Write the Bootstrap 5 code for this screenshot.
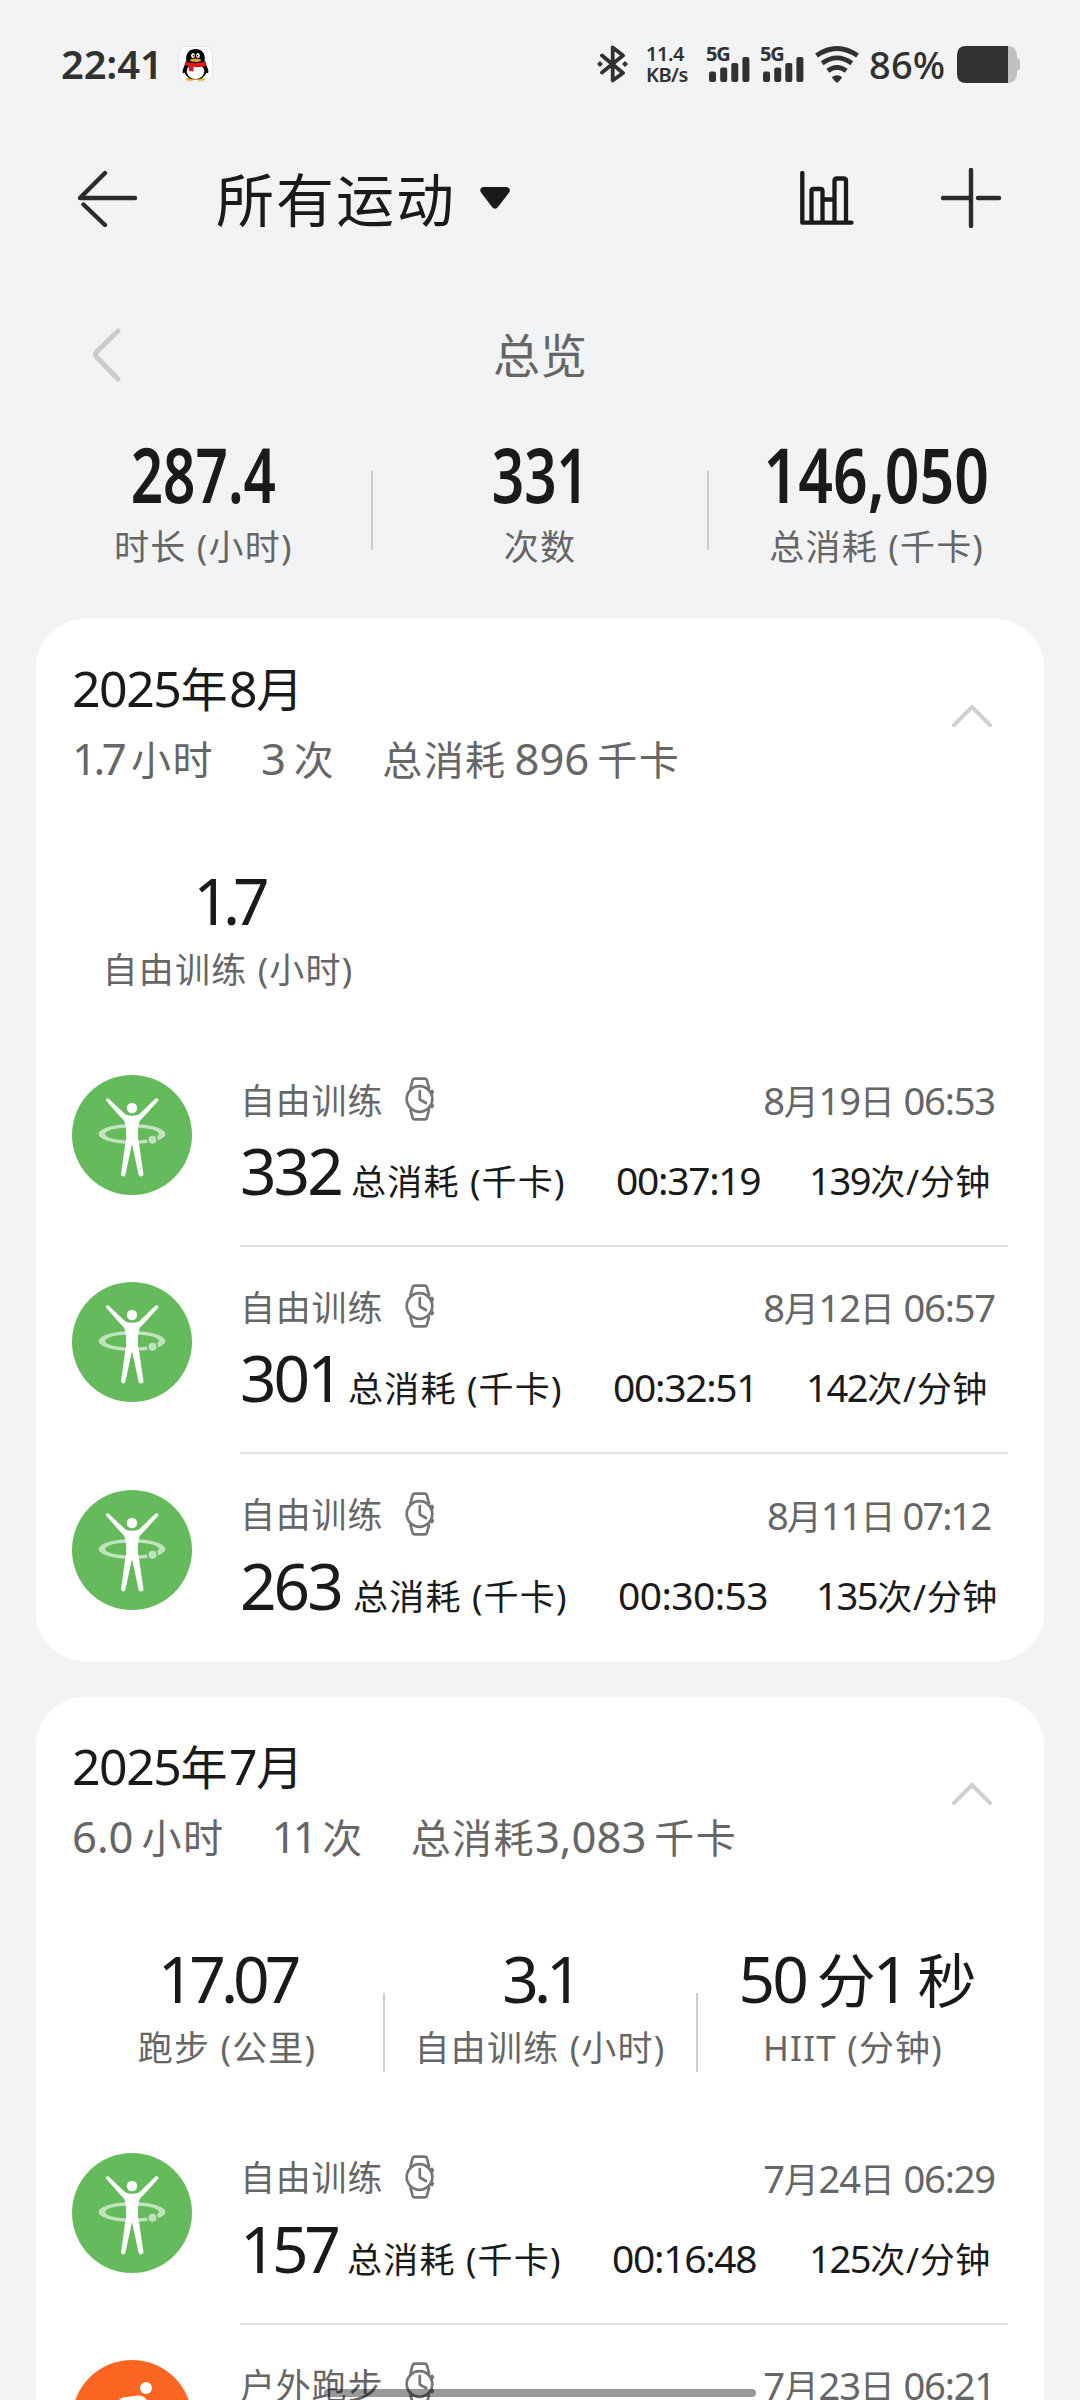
<!DOCTYPE html>
<html lang="zh-CN">
<head>
<meta charset="utf-8">
<meta name="viewport" content="width=device-width, initial-scale=1">
<title>所有运动</title>
<link href="https://cdn.jsdelivr.net/npm/bootstrap@5.3.0/dist/css/bootstrap.min.css" rel="stylesheet">
<style>
  body{background:#f1f3f5;color:#1a1a1a;font-family:"Noto Sans","Noto Sans CJK SC",sans-serif;font-size:35px;line-height:1}
  .screen{width:1080px;height:2400px;overflow:hidden}
  .cjk{font-family:"Noto Sans CJK SC",sans-serif}
  svg{display:block;flex:none}
  .soft{color:#666}
  /* status bar */
  .status{height:128px;padding:0 60px 0 61px;color:#303231}
  .clock{font-size:40px;font-weight:600;width:117px;letter-spacing:-.2px}
  .rate{font-size:20px;font-weight:600;line-height:21px;width:61px;letter-spacing:-.5px;margin-left:18px}
  .sig{width:54px;height:36px;padding-left:2px}
  .sig-tag{font-size:20px;font-weight:700;line-height:15px;left:-1px;top:0;letter-spacing:-1.2px}
  .pct{font-size:38px;font-weight:500;letter-spacing:.2px;width:88px;margin-left:10px}
  /* title bar */
  .topbar{height:140px;padding:0 77px 0 75px}
  .page-title{font-size:58px;letter-spacing:2px;margin-left:77px;line-height:64px;margin-top:-2px}
  .plus{margin-left:85px}
  /* overview */
  .overview-head{height:174px;padding:0 90px}
  .overview-title{font-size:47px;line-height:50px;margin-top:-5px}
  .totals{height:177px;padding:0 36px}
  .totals .stat{padding-top:2px}
  .totals .rule{margin-top:29px}
  .total-num{font-size:75px;font-weight:600;line-height:60px;height:60px;transform:scaleX(.755);white-space:nowrap}
  .total-num.long{transform:scaleX(.81)}
  .totals .stat-label{margin-top:25px}
  .stat-label{line-height:36px;color:#666;white-space:nowrap;letter-spacing:1.2px}
  .rule{width:2px;height:79px;background:#cbcccd;flex:none}
  /* month cards */
  .month{margin:0 36px 36px;border-radius:48px;background:#fff;padding:0 36px}
  .month-head{height:197px;padding-top:44px}
  .month-head > svg{margin:41px 15px 0 0}
  .month-title{font-size:47px;line-height:50px;letter-spacing:1.6px}
  .month-title .n{font-size:50px}
  .month-sub{font-size:40px;line-height:44px;letter-spacing:1.4px;color:#666;margin-top:22px}
  .month-sub .n{letter-spacing:0}
  .n{font-size:1.09em;letter-spacing:-.03em}
  .month-sub .tight{letter-spacing:-.08em}
  .gap-a{margin-left:47px}
  .month-stats{height:224px}
  .month-stats .stat{padding-top:53px}
  .month-stats .stat-label{margin-top:19px}
  .month-stats .rule{margin-top:99px;margin-left:1px}
  .stat-num{font-size:64px;line-height:64px;height:64px;white-space:nowrap;letter-spacing:-5px}
  .stat-num.narrow{letter-spacing:-7px}
  .stat-num.wide{letter-spacing:-3px;padding-left:6px}
  .stat-num .unit-cjk{font-size:59px;margin:0 0 0 11px}
  /* workout rows */
  .workout{height:207.4px;padding-top:35px}
  .workout.final{height:206px}
  .workout-body{margin-left:48px;width:768px;height:172px;border-bottom:2px solid #e2e2e2}
  .workout-body.last{border:0}
  .line-one{height:52px;padding-right:13px;letter-spacing:.8px;margin-top:-1px}
  .line-one svg{margin:-2px 0 0 22px}
  .line-two{height:80px;white-space:nowrap;padding-top:13px}
  .kcal{font-size:64px;letter-spacing:-3px;width:var(--kcal,111px);flex:none}
  .unit{width:265px;letter-spacing:1.2px;flex:none}
  .dur{font-size:39px;letter-spacing:var(--dls,-1.3px);width:var(--dur,193px);flex:none}
  .bpm{letter-spacing:.7px}
  .bpm .n{letter-spacing:-1.4px}
  .row-b{--kcal:108px;--dur:193px}
  .row-c{--kcal:113px;--dur:198px;--dls:-.6px}
  .row-d{--kcal:107px;--dur:197px}
  .row-d .kcal{letter-spacing:-4.5px}
  .date{letter-spacing:-.2px}
  .date .n{letter-spacing:-1.2px}
  .row-c .date{letter-spacing:-1px;margin-right:5px}
  .row-c .date .n{letter-spacing:-2px}
  .gesture{left:324px;top:2389px;width:432px;height:8px;border-radius:4px;background:rgba(0,0,0,.4)}
</style>
<script src="https://cdn.jsdelivr.net/npm/bootstrap@5.3.0/dist/js/bootstrap.bundle.min.js"></script>
</head>
<body>
<svg width="0" height="0" class="position-absolute">
  <defs>
    <symbol id="free" viewBox="0 0 120 120">
      <circle cx="60" cy="60" r="60" fill="#65bb5c"/>
      <path fill="#fff" fill-opacity=".6" fill-rule="evenodd" d="M26.5 59a33.5 10 0 0 1 67 0a33.5 10 0 0 1-67 0zM33 59a27 6.6 0 0 0 54 0a27 6.6 0 0 0-54 0z"/>
      <circle cx="80.500" cy="64.700" r="5.600" fill="#65bb5c"/>
      <circle cx="80.500" cy="64.700" r="4" fill="#c1e4be"/>
      <circle cx="60" cy="33" r="5.200" fill="#fff"/>
      <path fill="#fff" d="M36.500 23.500Q34 22.500 34 25.500L48 41.500Q52 44.500 53 48L54.200 56Q54.500 64 53 70L49 100Q51 102.500 53.200 100.500L60 69L66.800 100.500Q69.500 102.500 71.500 100L67.200 70Q65.500 64 65.800 56L67 48Q68 44.500 72 41.500L86.500 25.500Q86.500 22.500 83.500 23.500L67 39.500Q60 42 53.500 39.500Z"/>
    </symbol>
    <symbol id="run" viewBox="0 0 120 120">
      <circle cx="60" cy="60" r="60" fill="#fa6522"/>
      <circle cx="74" cy="28" r="6" fill="#fff"/>
      <path fill="#fff" d="M40 54L47 40Q48 38 51 37.500L66 35.500Q71 35 74 39L80 50L92 54L91 58L77 54L72 50L66 66L78 76L80 98L74 98L71 80L56 70L50 84L30 86V80L46 78L58 42L51 44L44 56Z"/>
    </symbol>
    <symbol id="watch" viewBox="0 0 30 44">
      <g fill="none" stroke="#757575" stroke-width="2.700" stroke-linecap="round" stroke-linejoin="round">
        <circle cx="14.500" cy="22" r="12.800"/>
        <path d="M5.500 11L7.500 3.500Q8 1.600 10 1.600H19.500Q21.500 1.600 22 3.500L24 11M5.500 33L7.500 40.500Q8 42.400 10 42.400H19.500Q21.500 42.400 22 40.500L24 33M14.800 14V22.500L21 26M27 14L27.800 15.500M27 30L27.800 28.500"/>
      </g>
    </symbol>
    <symbol id="up" viewBox="0 0 42 24">
      <path d="M3 21L21 3L39 21" fill="none" stroke="#d0d0d0" stroke-width="4" stroke-linecap="round"/>
    </symbol>
    <symbol id="bars" viewBox="0 0 42 26">
      <g fill="#303231"><rect x="0" y="15.500" width="7" height="10.500" rx="2"/><rect x="11.200" y="11.500" width="7" height="14.500" rx="2"/><rect x="22.300" y="7" width="7" height="19" rx="2"/><rect x="33.400" y="1" width="7" height="25" rx="2"/></g>
    </symbol>
  </defs>
</svg>

<main class="screen position-relative">
  <header class="status d-flex align-items-center">
    <div class="clock">22:41</div>
    <svg width="35" height="36" viewBox="0 0 35 36">
      <rect x=".5" y=".5" width="34" height="35" rx="8" fill="#fff" stroke="#e4e4e4"/>
      <ellipse cx="12" cy="33.300" rx="4" ry="1.500" fill="#f0b020"/><ellipse cx="23" cy="33.300" rx="4" ry="1.500" fill="#f0b020"/>
      <path d="M8.300 15C7.300 6.500 12 3 17.500 3S27.700 6.500 26.700 15L30.300 24Q30.800 28.500 28.500 26.500Q26.500 33 17.500 33.500Q8.500 33 6.500 26.500Q4.200 28.500 4.700 24Z" fill="#000"/>
      <ellipse cx="17.500" cy="25.500" rx="8.800" ry="7.400" fill="#fff"/>
      <path d="M7.500 15.500Q17.500 19 27.500 15.500L28.500 19.500Q22 22 15.500 20.800V25.500L11 25V20L6.500 18.800Z" fill="#e8141c"/>
      <ellipse cx="15" cy="9.500" rx="1.900" ry="2.500" fill="#fff"/><ellipse cx="20" cy="9.500" rx="1.900" ry="2.500" fill="#fff"/>
      <circle cx="15.500" cy="9.700" r=".8"/><circle cx="19.600" cy="9.700" r=".8"/>
      <ellipse cx="17.500" cy="14.300" rx="5.500" ry="1.700" fill="#f0a51c"/>
    </svg>
    <svg class="ms-auto" width="31" height="38" viewBox="0 0 31 38">
      <path d="M5 10.500L26 28L15.700 35.500V2.500L26 10.500L5 27.500" fill="none" stroke="#303231" stroke-width="3.800" stroke-linejoin="round" stroke-linecap="round"/>
      <path d="M3 16l3 3-3 3-3-3zM28 16l3 3-3 3-3-3z" fill="#303231"/>
    </svg>
    <div class="rate">11.4<br>KB/s</div>
    <div class="sig position-relative d-flex align-items-end"><span class="sig-tag position-absolute">5G</span><svg width="42" height="26"><use href="#bars"/></svg></div>
    <div class="sig position-relative d-flex align-items-end"><span class="sig-tag position-absolute">5G</span><svg width="42" height="26"><use href="#bars"/></svg></div>
    <svg width="44" height="37" viewBox="0 0 44 37">
      <g fill="none" stroke="#303231" stroke-width="4.800"><path d="M1.500 9.500Q22-4.500 42.500 9.500"/><path d="M7.200 17.200Q22 6.500 36.800 17.200"/><path d="M12.800 24.800Q22 18 31.200 24.800"/></g>
      <path d="M17 31Q22 27.500 27 31Q27 32.500 22 37Q17 32.500 17 31Z" fill="#303231"/>
    </svg>
    <div class="pct">86%</div>
    <svg width="63" height="37" viewBox="0 0 63 36" preserveAspectRatio="none">
      <path d="M50 0H52Q60 1 60 10V12Q63 12 63 15V21Q63 24 60 24V26Q60 35 52 36H50Z" fill="#c0c1c2"/>
      <path d="M9 0H51V36H9Q0 36 0 27V9Q0 0 9 0Z" fill="#303231"/>
    </svg>
  </header>

  <nav class="topbar d-flex align-items-center">
    <svg width="64" height="60" viewBox="0 0 64 60">
      <path d="M60 30H5L30 5M8.500 36.500L30 57" fill="none" stroke="#2b2b2b" stroke-width="4.400" stroke-linecap="round" stroke-linejoin="round"/>
    </svg>
    <div class="page-title cjk">所有运动</div>
    <svg class="ms-4" width="30" height="22" viewBox="0 0 30 22"><path d="M3 0H27Q31 1.500 29.500 5L18 20Q15 23.500 12 20L.7 5Q-1 1.500 3 0Z" fill="#1a1a1a"/></svg>
    <svg class="ms-auto" width="54" height="54" viewBox="0 0 54 54">
      <path d="M2.300 2V51.700H51.500M11.500 51V20Q11.500 18 13.500 18H20.500Q22.500 18 22.500 20V51M23 28.500H34M34.500 51V10Q34.500 7.500 37 7.500H43.500Q46 7.500 46 10V51" fill="none" stroke="#1a1a1a" stroke-width="4.300" stroke-linecap="round" stroke-linejoin="round"/>
    </svg>
    <svg class="plus" width="64" height="60" viewBox="0 0 64 60">
      <path d="M32 2V58M4 30H31M39 30H60" fill="none" stroke="#2b2b2b" stroke-width="4.400" stroke-linecap="round"/>
    </svg>
  </nav>

  <section class="overview-head d-flex align-items-center justify-content-between">
    <svg width="32" height="54" viewBox="0 0 32 54"><path d="M28 3L6.500 24Q4.500 26.500 6.500 29L28 51" fill="none" stroke="#cacbcd" stroke-width="5" stroke-linecap="round"/></svg>
    <div class="overview-title cjk soft">总览</div>
    <span class="px-3"></span>
  </section>
  <section class="totals d-flex text-center">
    <div class="stat w-100"><div class="total-num">287.4</div><div class="stat-label">时长 (小时)</div></div>
    <div class="rule"></div>
    <div class="stat w-100"><div class="total-num">331</div><div class="stat-label">次数</div></div>
    <div class="rule"></div>
    <div class="stat w-100"><div class="total-num long">146,050</div><div class="stat-label">总消耗 (千卡)</div></div>
  </section>

  <section class="month">
    <div class="month-head d-flex justify-content-between">
      <div>
        <div class="month-title"><span class="n">2025</span>年<span class="n">8</span>月</div>
        <div class="month-sub d-flex align-items-baseline"><span class="n tight">1.7</span><span class="ms-2">小时</span><span class="n gap-a">3</span><span class="ms-2">次</span><span class="gap-a">总消耗</span><span class="n ms-2">896</span><span class="ms-2">千卡</span></div>
      </div>
      <svg width="42" height="24"><use href="#up"/></svg>
    </div>
    <div class="month-stats d-flex text-center">
      <div class="stat w-100"><div class="stat-num narrow">1.7</div><div class="stat-label">自由训练 (小时)</div></div>
      <div class="w-100"></div><div class="w-100"></div>
    </div>
    <div class="workout d-flex">
      <svg width="120" height="120"><use href="#free"/></svg>
      <div class="workout-body">
        <div class="line-one d-flex align-items-center soft"><span>自由训练</span><svg width="30" height="44"><use href="#watch"/></svg><span class="date ms-auto"><span class="n">8</span>月<span class="n">19</span>日 <span class="n">06:53</span></span></div>
        <div class="line-two d-flex align-items-baseline"><span class="kcal">332</span><span class="unit">总消耗 (千卡)</span><span class="dur">00:37:19</span><span class="bpm"><span class="n">139</span>次/分钟</span></div>
      </div>
    </div>
    <div class="workout row-b d-flex">
      <svg width="120" height="120"><use href="#free"/></svg>
      <div class="workout-body">
        <div class="line-one d-flex align-items-center soft"><span>自由训练</span><svg width="30" height="44"><use href="#watch"/></svg><span class="date ms-auto"><span class="n">8</span>月<span class="n">12</span>日 <span class="n">06:57</span></span></div>
        <div class="line-two d-flex align-items-baseline"><span class="kcal">301</span><span class="unit">总消耗 (千卡)</span><span class="dur">00:32:51</span><span class="bpm"><span class="n">142</span>次/分钟</span></div>
      </div>
    </div>
    <div class="workout final row-c d-flex">
      <svg width="120" height="120"><use href="#free"/></svg>
      <div class="workout-body last">
        <div class="line-one d-flex align-items-center soft"><span>自由训练</span><svg width="30" height="44"><use href="#watch"/></svg><span class="date ms-auto"><span class="n">8</span>月<span class="n">11</span>日 <span class="n">07:12</span></span></div>
        <div class="line-two d-flex align-items-baseline"><span class="kcal">263</span><span class="unit">总消耗 (千卡)</span><span class="dur">00:30:53</span><span class="bpm"><span class="n">135</span>次/分钟</span></div>
      </div>
    </div>
  </section>

  <section class="month">
    <div class="month-head d-flex justify-content-between">
      <div>
        <div class="month-title"><span class="n">2025</span>年<span class="n">7</span>月</div>
        <div class="month-sub d-flex align-items-baseline"><span class="n">6.0</span><span class="ms-2">小时</span><span class="n tight gap-a">11</span><span class="ms-2">次</span><span class="gap-a">总消耗</span><span class="n">3,083</span><span class="ms-2">千卡</span></div>
      </div>
      <svg width="42" height="24"><use href="#up"/></svg>
    </div>
    <div class="month-stats d-flex text-center">
      <div class="stat w-100"><div class="stat-num">17.07</div><div class="stat-label">跑步 (公里)</div></div>
      <div class="rule"></div>
      <div class="stat w-100"><div class="stat-num">3.1</div><div class="stat-label">自由训练 (小时)</div></div>
      <div class="rule"></div>
      <div class="stat w-100"><div class="stat-num wide">50<span class="unit-cjk">分</span>1<span class="unit-cjk">秒</span></div><div class="stat-label">HIIT (分钟)</div></div>
    </div>
    <div class="workout row-d d-flex">
      <svg width="120" height="120"><use href="#free"/></svg>
      <div class="workout-body">
        <div class="line-one d-flex align-items-center soft"><span>自由训练</span><svg width="30" height="44"><use href="#watch"/></svg><span class="date ms-auto"><span class="n">7</span>月<span class="n">24</span>日 <span class="n">06:29</span></span></div>
        <div class="line-two d-flex align-items-baseline"><span class="kcal">157</span><span class="unit">总消耗 (千卡)</span><span class="dur">00:16:48</span><span class="bpm"><span class="n">125</span>次/分钟</span></div>
      </div>
    </div>
    <div class="workout d-flex">
      <svg width="120" height="120"><use href="#run"/></svg>
      <div class="workout-body last">
        <div class="line-one d-flex align-items-center soft"><span>户外跑步</span><svg width="30" height="44"><use href="#watch"/></svg><span class="date ms-auto"><span class="n">7</span>月<span class="n">23</span>日 <span class="n">06:21</span></span></div>
      </div>
    </div>
  </section>

  <div class="gesture position-absolute"></div>
</main>
</body>
</html>
